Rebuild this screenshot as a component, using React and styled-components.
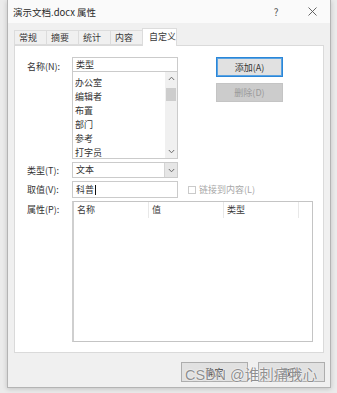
import React from 'react';
import styled, { createGlobalStyle } from 'styled-components';

const GlobalStyle = createGlobalStyle`
  html, body {
    margin: 0;
    padding: 0;
  }
  body {
    background: #ebebeb;
    font-family: "Noto Sans CJK SC", "Noto Sans", sans-serif;
    font-size: 9px;
    color: #333;
  }
`;

const Screen = styled.div`
  position: relative;
  width: 337px;
  height: 393px;
  overflow: hidden;
  padding-left: 7px;
  box-sizing: border-box;
  background: #ebebeb;
`;

const Window = styled.div`
  width: 324px;
  height: 388px;
  box-sizing: border-box;
  border: 1px solid #b4b4b4;
  border-top: none;
  background: #f0f0f0;
  box-shadow: 0 1px 5px rgba(0, 0, 0, 0.18);
  display: flex;
  flex-direction: column;
`;

const TitleBar = styled.div`
  height: 23px;
  flex-shrink: 0;
  display: flex;
  align-items: center;
  padding-left: 5px;
  background: #fafafa;
`;

const Title = styled.div`
  flex: 1;
  font-size: 9.5px;
  color: #2a2a2a;
`;

const TitleButton = styled.div`
  width: 36px;
  height: 23px;
  display: flex;
  align-items: center;
  justify-content: center;
  color: #555;
  font-size: 10px;
`;

const Body = styled.div`
  flex: 1;
  padding: 5px 6px 0 6px;
  display: flex;
  flex-direction: column;
`;

const TabStrip = styled.div`
  display: flex;
  height: 17px;
  align-items: flex-start;
`;

const Tab = styled.div`
  position: relative;
  z-index: ${p => (p.$active ? 1 : 0)};
  width: ${p => (p.$active ? 35 : 33)}px;
  height: ${p => (p.$active ? 18 : 15)}px;
  margin-top: ${p => (p.$active ? 0 : 2)}px;
  margin-left: -1px;
  box-sizing: border-box;
  padding-left: ${p => (p.$active ? 6 : 4)}px;
  border: 1px solid #dcdcdc;
  border-bottom: ${p => (p.$active ? 'none' : '1px solid #dcdcdc')};
  background: ${p => (p.$active ? '#fff' : '#f0f0f0')};
  line-height: ${p => (p.$active ? 15 : 13)}px;
  color: #3a3a3a;

  &:first-child {
    margin-left: 0;
  }
`;

const Panel = styled.div`
  height: 308px;
  box-sizing: border-box;
  border: 1px solid #dadada;
  background: #fff;
  padding: 11px 0 0 12px;
  display: flex;
  flex-direction: column;
  gap: 3px;
`;

const Row = styled.div`
  display: flex;
  align-items: ${p => p.$align || 'flex-start'};
`;

const Label = styled.div`
  width: 45px;
  flex-shrink: 0;
  line-height: 15px;
  padding-top: ${p => p.$top || 0}px;
  color: #333;
`;

const NameColumn = styled.div`
  width: 106px;
  display: flex;
  flex-direction: column;
`;

const TextBox = styled.div`
  width: 106px;
  height: ${p => p.$h || 15}px;
  box-sizing: border-box;
  border: 1px solid #cbcbcb;
  background: #fff;
  padding-left: 3px;
  line-height: ${p => (p.$h || 15) - 2}px;
  display: flex;
  align-items: center;
`;

const Caret = styled.span`
  display: inline-block;
  width: 1px;
  height: 10px;
  background: #111;
  margin-left: 1px;
`;

const ListBox = styled.div`
  height: 87px;
  box-sizing: border-box;
  border: 1px solid #cbcbcb;
  border-top: none;
  display: flex;
`;

const ListItems = styled.div`
  flex: 1;
  padding: 4px 0 0 2px;
`;

const ListItem = styled.div`
  line-height: 14px;
`;

const ScrollBar = styled.div`
  width: 12px;
  background: #f0f0f0;
  display: flex;
  flex-direction: column;
  align-items: center;
`;

const ScrollArrow = styled.div`
  height: 13px;
  display: flex;
  align-items: center;
  justify-content: center;
`;

const ScrollTrack = styled.div`
  flex: 1;
  width: 100%;
  padding-top: 3px;
`;

const ScrollThumb = styled.div`
  height: 13px;
  margin: 0 1px;
  background: #cdcdcd;
`;

const ActionColumn = styled.div`
  margin-left: 38px;
  display: flex;
  flex-direction: column;
  gap: 6px;
`;

const DialogButton = styled.div`
  width: 67px;
  height: ${p => p.$h || 20}px;
  box-sizing: border-box;
  display: flex;
  align-items: center;
  justify-content: center;
  background: ${p => (p.$disabled ? '#cccccc' : '#e1e1e1')};
  border: 1px solid ${p => (p.$primary ? '#2a86d8' : p.$disabled ? '#c4c4c4' : '#adadad')};
  box-shadow: ${p => (p.$primary ? 'inset 0 0 0 1px #5aa3e2' : 'none')};
  color: ${p => (p.$disabled ? '#9a9a9a' : '#333')};
`;

const Select = styled.div`
  width: 106px;
  height: 16px;
  box-sizing: border-box;
  border: 1px solid #cbcbcb;
  background: #fff;
  display: flex;
`;

const SelectValue = styled.div`
  flex: 1;
  padding-left: 3px;
  line-height: 14px;
`;

const SelectArrow = styled.div`
  width: 12px;
  background: #e6e6e6;
  border-left: 1px solid #d4d4d4;
  display: flex;
  align-items: center;
  justify-content: center;
`;

const CheckLabel = styled.div`
  display: flex;
  align-items: center;
  margin-left: 10px;
  color: #a8a8a8;
`;

const CheckBox = styled.span`
  width: 8px;
  height: 8px;
  box-sizing: border-box;
  border: 1px solid #cacaca;
  background: #fff;
  margin-right: 3px;
`;

const ListView = styled.div`
  width: 241px;
  height: 141px;
  box-sizing: border-box;
  border: 1px solid #c4c4c4;
  border-left: 2px solid #cfcfcf;
  background: #fff;
`;

const HeaderRow = styled.div`
  display: flex;
  height: 16px;
`;

const HeaderCell = styled.div`
  width: 75px;
  box-sizing: border-box;
  padding-left: 3px;
  line-height: 16px;
  border-right: 1px solid #e8e8e8;
  color: #3a3a3a;
`;

const Footer = styled.div`
  height: 34px;
  display: flex;
  justify-content: flex-end;
  align-items: flex-start;
  gap: 10px;
  padding: 9px 5px 0 0;
  box-sizing: border-box;
`;

const Watermark = styled.div`
  position: absolute;
  left: 185px;
  top: 363px;
  font-family: "Liberation Sans", "Noto Sans CJK SC", sans-serif;
  font-size: 14.5px;
  color: #8f8f8f;
  white-space: nowrap;
  text-shadow: 0 0 1px #fff, 0 0 2px #fff;
`;

const Chevron = ({ up }) => (
  <svg width="7" height="5" viewBox="0 0 7 5">
    <path
      d={up ? 'M0.8 4 L3.5 1.2 L6.2 4' : 'M0.8 1 L3.5 3.8 L6.2 1'}
      fill="none"
      stroke="#6a6a6a"
      strokeWidth="1"
    />
  </svg>
);

const CloseIcon = () => (
  <svg width="9" height="9" viewBox="0 0 9 9">
    <path d="M0.5 0.5 L8.5 8.5 M8.5 0.5 L0.5 8.5" stroke="#555" strokeWidth="0.9" />
  </svg>
);

const tabs = ['常规', '摘要', '统计', '内容', '自定义'];
const names = ['办公室', '编辑者', '布置', '部门', '参考', '打字员'];
const columns = ['名称', '值', '类型'];

export default function App() {
  return (
    <>
      <GlobalStyle />
      <Screen>
        <Window>
          <TitleBar>
            <Title>演示文档.docx 属性</Title>
            <TitleButton>?</TitleButton>
            <TitleButton>
              <CloseIcon />
            </TitleButton>
          </TitleBar>
          <Body>
            <TabStrip>
              {tabs.map((t, i) => (
                <Tab key={t} $active={i === tabs.length - 1}>
                  {t}
                </Tab>
              ))}
            </TabStrip>
            <Panel>
              <Row>
                <Label $top={2}>名称(N):</Label>
                <NameColumn>
                  <TextBox>类型</TextBox>
                  <ListBox>
                    <ListItems>
                      {names.map(n => (
                        <ListItem key={n}>{n}</ListItem>
                      ))}
                    </ListItems>
                    <ScrollBar>
                      <ScrollArrow>
                        <Chevron up />
                      </ScrollArrow>
                      <ScrollTrack>
                        <ScrollThumb />
                      </ScrollTrack>
                      <ScrollArrow>
                        <Chevron />
                      </ScrollArrow>
                    </ScrollBar>
                  </ListBox>
                </NameColumn>
                <ActionColumn>
                  <DialogButton $primary>添加(A)</DialogButton>
                  <DialogButton $disabled $h={19}>删除(D)</DialogButton>
                </ActionColumn>
              </Row>
              <Row $align="center">
                <Label>类型(T):</Label>
                <Select>
                  <SelectValue>文本</SelectValue>
                  <SelectArrow>
                    <Chevron />
                  </SelectArrow>
                </Select>
              </Row>
              <Row $align="center">
                <Label>取值(V):</Label>
                <TextBox $h={17}>
                  科普
                  <Caret />
                </TextBox>
                <CheckLabel>
                  <CheckBox />
                  链接到内容(L)
                </CheckLabel>
              </Row>
              <Row>
                <Label $top={1}>属性(P):</Label>
                <ListView>
                  <HeaderRow>
                    {columns.map(c => (
                      <HeaderCell key={c}>{c}</HeaderCell>
                    ))}
                  </HeaderRow>
                </ListView>
              </Row>
            </Panel>
          </Body>
          <Footer>
            <DialogButton>确定</DialogButton>
            <DialogButton>取消</DialogButton>
          </Footer>
        </Window>
        <Watermark>CSDN @谁刺痛我心</Watermark>
      </Screen>
    </>
  );
}
